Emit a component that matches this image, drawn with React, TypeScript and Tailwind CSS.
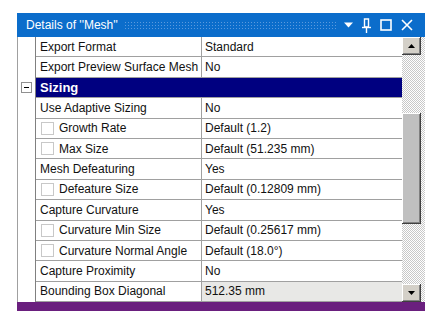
import React from "react";

type Row =
  | { kind: "prop"; name: string; value: string; check?: boolean; readOnly?: boolean }
  | { kind: "group"; name: string };

const rows: Row[] = [
  { kind: "prop", name: "Export Format", value: "Standard" },
  { kind: "prop", name: "Export Preview Surface Mesh", value: "No" },
  { kind: "group", name: "Sizing" },
  { kind: "prop", name: "Use Adaptive Sizing", value: "No" },
  { kind: "prop", name: "Growth Rate", value: "Default (1.2)", check: true },
  { kind: "prop", name: "Max Size", value: "Default (51.235 mm)", check: true },
  { kind: "prop", name: "Mesh Defeaturing", value: "Yes" },
  { kind: "prop", name: "Defeature Size", value: "Default (0.12809 mm)", check: true },
  { kind: "prop", name: "Capture Curvature", value: "Yes" },
  { kind: "prop", name: "Curvature Min Size", value: "Default (0.25617 mm)", check: true },
  { kind: "prop", name: "Curvature Normal Angle", value: "Default (18.0°)", check: true },
  { kind: "prop", name: "Capture Proximity", value: "No" },
  { kind: "prop", name: "Bounding Box Diagonal", value: "512.35 mm", readOnly: true },
];

const bevel =
  "shadow-[inset_-1px_-1px_#404040,inset_1px_1px_#ffffff,inset_-2px_-2px_#808080]";

const TitleIcons = () => (
  <div className="flex items-center gap-[9px] pr-[12px] text-white">
    {/* dropdown */}
    <svg width="9" height="6" viewBox="0 0 9 6">
      <path d="M0 0.5h9L4.5 5.5z" fill="#fff" />
    </svg>
    {/* pin */}
    <svg width="9" height="15" viewBox="0 0 9 15">
      <path d="M2.5 1h4v8H2.5z M6.5 1v8" fill="none" stroke="#fff" strokeWidth="1.4" />
      <path d="M0 9.5h9" stroke="#fff" strokeWidth="1.4" />
      <path d="M4.5 10v5" stroke="#fff" strokeWidth="1.4" />
    </svg>
    {/* maximize */}
    <svg width="12" height="12" viewBox="0 0 12 12">
      <rect x="1" y="1" width="10" height="10" fill="none" stroke="#fff" strokeWidth="1.6" />
    </svg>
    {/* close */}
    <svg width="12" height="12" viewBox="0 0 12 12">
      <path d="M1 1L11 11M11 1L1 11" stroke="#fff" strokeWidth="1.6" />
    </svg>
  </div>
);

const Arrow = ({ up }: { up?: boolean }) => (
  <svg width="7" height="4" viewBox="0 0 7 4">
    <path d={up ? "M0 4h7L3.5 0z" : "M0 0h7L3.5 4z"} fill="#000" />
  </svg>
);

export default function App() {
  return (
    <div
      className="w-[442px] h-[323px] bg-white pt-[13px] pl-[17px] text-[12px] text-[#111]"
      style={{ fontFamily: '"Liberation Sans", Arial, sans-serif' }}
    >
      <div className="w-[408px] flex flex-col">
        {/* Title bar */}
        <div className="h-[24px] bg-[#0b6dcb] flex items-center">
          <span className="pl-[9px] pr-[6px] text-white text-[12px] whitespace-nowrap">
            Details of ''Mesh''
          </span>
          <div className="flex-1 h-[9px] mr-[8px] bg-[radial-gradient(circle,#5b9ade_0.7px,transparent_0.9px)] bg-[length:3px_3px]" />
          <TitleIcons />
        </div>

        {/* Body */}
        <div className="flex h-[265px] border-l border-[#a0a0a0]">
          {/* gutter */}
          <div className="w-[17px] bg-white flex flex-col">
            {rows.map((r, i) => (
              <div key={i} className="h-[20.4px] flex items-center justify-center">
                {r.kind === "group" && (
                  <div className="w-[11px] h-[11px] border border-[#909090] bg-white flex items-center justify-center">
                    <div className="w-[5px] h-[1px] bg-black" />
                  </div>
                )}
              </div>
            ))}
          </div>

          {/* grid */}
          <div className="w-[367px] flex flex-col border-l border-[#808080]">
            {rows.map((r, i) =>
              r.kind === "group" ? (
                <div
                  key={i}
                  className="h-[20.4px] bg-[#000080] text-white font-bold text-[13px] flex items-center pl-[4px] border-b border-[#a0a0a0]"
                >
                  {r.name}
                </div>
              ) : (
                <div key={i} className="h-[20.4px] flex border-b border-[#a0a0a0]">
                  <div className="w-[166px] flex items-center pl-[4px] border-r border-[#a0a0a0] whitespace-nowrap">
                    {r.check && (
                      <div className="w-[13px] h-[13px] border border-[#c8c8c8] bg-white mr-[5px] ml-[1px]" />
                    )}
                    {r.name}
                  </div>
                  <div
                    className={`flex-1 flex items-center pl-[3px] whitespace-nowrap ${
                      r.readOnly ? "bg-[#e8e8e6]" : "bg-white"
                    }`}
                  >
                    {r.value}
                  </div>
                </div>
              )
            )}
          </div>

          {/* scrollbar */}
          <div className="w-[23px] flex flex-col bg-[repeating-conic-gradient(#c8c8c8_0_25%,#ffffff_0_50%)] bg-[length:2px_2px]">
            <div className="w-[19px] flex flex-col h-full">
              <div className={`h-[18px] shrink-0 flex items-center justify-center bg-[#d4d0c8] ${bevel}`}>
                <Arrow up />
              </div>
              <div className="h-[58px] shrink-0" />
              <div className={`h-[111px] shrink-0 bg-[#c0c0c0] ${bevel}`} />
              <div className="flex-1" />
              <div className={`h-[18px] shrink-0 flex items-center justify-center bg-[#d4d0c8] ${bevel}`}>
                <Arrow />
              </div>
            </div>
          </div>
        </div>

        {/* bottom bar */}
        <div className="h-[9px] bg-[#6a1f7e]" />
      </div>
    </div>
  );
}
